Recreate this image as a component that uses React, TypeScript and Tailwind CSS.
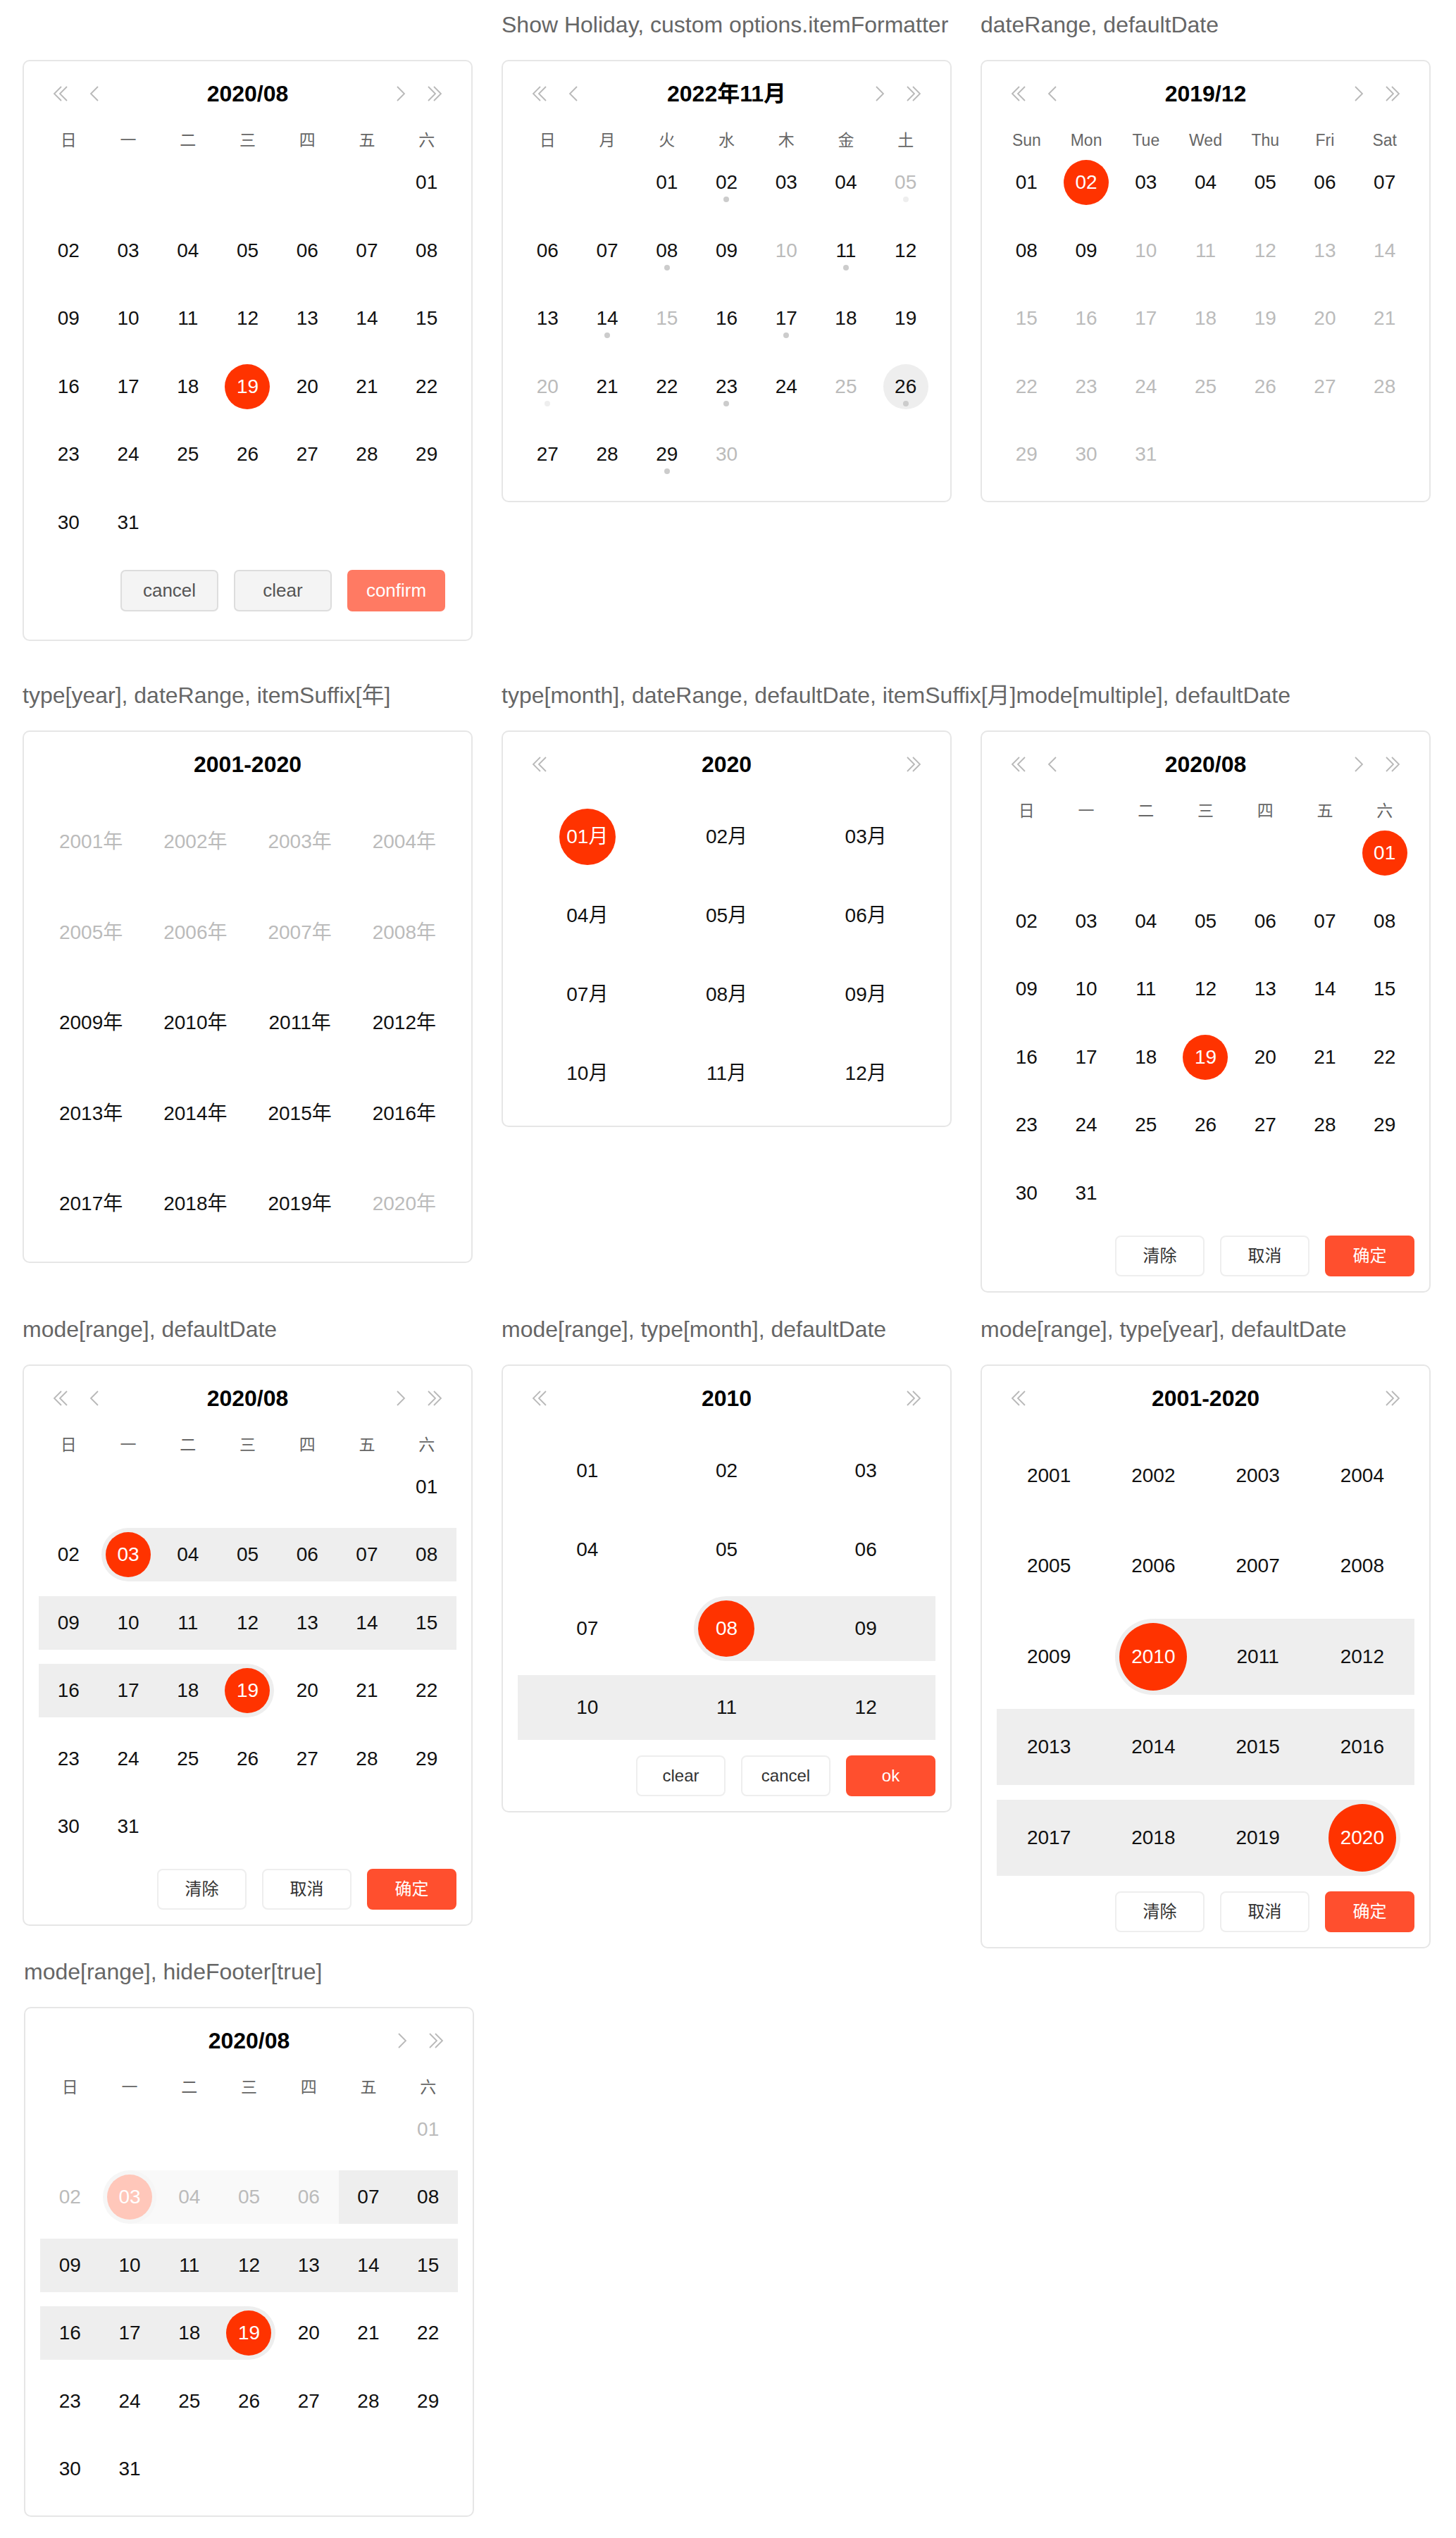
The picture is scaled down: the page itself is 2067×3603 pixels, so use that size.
import React from 'react';

type Band = 'full' | 'left' | 'right' | 'fullLight' | 'rightLight';
type Cell = {
    t: string;
    muted?: boolean;
    mark?: 'red' | 'pale' | 'gray';
    band?: Band;
    halo?: 'dark' | 'light';
    dot?: 'dark' | 'light';
} | null;

type Kind = 'day' | 'month' | 'year';

const SIZES: Record<Kind, { cell: string; halo: string; circle: string; cols: string; grid: string }> = {
    day: { cell: 'h-[76px]', halo: 'h-[76px] w-[76px]', circle: 'h-[64px] w-[64px]', cols: 'grid-cols-7', grid: 'gap-y-[20.5px]' },
    month: { cell: 'h-[92px]', halo: 'h-[92px] w-[92px]', circle: 'h-[80px] w-[80px]', cols: 'grid-cols-3', grid: 'mt-[33px] gap-y-[20px]' },
    year: { cell: 'h-[108px]', halo: 'h-[108px] w-[108px]', circle: 'h-[96px] w-[96px]', cols: 'grid-cols-4', grid: 'mt-[32px] gap-y-[20.5px]' },
};

const BANDS: Record<Band, string> = {
    full: 'bg-[#eeeeee]',
    left: 'bg-[linear-gradient(to_right,#eeeeee_50%,transparent_50%)]',
    right: 'bg-[linear-gradient(to_right,transparent_50%,#eeeeee_50%)]',
    fullLight: 'bg-[#f9f9f9]',
    rightLight: 'bg-[linear-gradient(to_right,transparent_50%,#f9f9f9_50%)]',
};

const MARKS = {
    red: 'bg-[#ff3300] text-white',
    pale: 'bg-[#ffc7ba] text-white',
    gray: 'bg-[#eeeeee] text-[#111]',
};

const CN_WEEK = ['日', '一', '二', '三', '四', '五', '六'];
const JP_WEEK = ['日', '月', '火', '水', '木', '金', '土'];
const EN_WEEK = ['Sun', 'Mon', 'Tue', 'Wed', 'Thu', 'Fri', 'Sat'];

function pad(n: number) {
    return n < 10 ? `0${n}` : `${n}`;
}

// builds a month grid: blanks first, then the days, then blanks to fill the last week
function monthDays(offset: number, count: number, fn: (d: number) => Partial<NonNullable<Cell>> = () => ({})): Cell[] {
    const cells: Cell[] = [];
    for (let i = 0; i < offset; i++) cells.push(null);
    for (let d = 1; d <= count; d++) cells.push({ t: pad(d), ...fn(d) });
    while (cells.length % 7 !== 0) cells.push(null);
    return cells;
}

function Chevron({ dir, double }: { dir: 'left' | 'right'; double?: boolean }) {
    const flip = dir === 'right' ? 'scale(-1,1)' : undefined;
    if (double) {
        return (
            <svg width="24" height="22" viewBox="0 0 24 22" fill="none" stroke="#b8b8b8" strokeWidth="1.8">
                <g transform={flip} style={{ transformOrigin: '12px 11px' }}>
                    <polyline points="13,1 3,11 13,21" />
                    <polyline points="21,1 11,11 21,21" />
                </g>
            </svg>
        );
    }
    return (
        <svg width="14" height="22" viewBox="0 0 14 22" fill="none" stroke="#b8b8b8" strokeWidth="1.8">
            <g transform={flip} style={{ transformOrigin: '7px 11px' }}>
                <polyline points="12,1 2,11 12,21" />
            </g>
        </svg>
    );
}

function ArrowBox({ children }: { children?: React.ReactNode }) {
    return <div className="flex w-[48px] items-center justify-center">{children}</div>;
}

function DateCell({ cell, kind }: { cell: Cell; kind: Kind }) {
    const s = SIZES[kind];
    if (!cell) return <div className={s.cell} />;
    const text = cell.muted ? 'text-[#bbbbbb]' : 'text-[#111]';
    let inner: React.ReactNode = <span className={text}>{cell.t}</span>;
    if (cell.mark) {
        inner = (
            <span className={`flex items-center justify-center rounded-full ${s.circle} ${MARKS[cell.mark]}`}>{cell.t}</span>
        );
    }
    if (cell.halo) {
        inner = (
            <span
                className={`flex items-center justify-center rounded-full ${s.halo} ${cell.halo === 'light' ? 'bg-[#f6f6f6]' : 'bg-[#eeeeee]'}`}
            >
                {inner}
            </span>
        );
    }
    return (
        <div className={`relative flex items-center justify-center ${s.cell} ${cell.band ? BANDS[cell.band] : ''}`}>
            {inner}
            {cell.dot && (
                <span
                    className={`absolute left-1/2 top-[calc(50%+20px)] h-[8px] w-[8px] -translate-x-1/2 rounded-full ${
                        cell.dot === 'light' ? 'bg-[#eeeeee]' : 'bg-[#cccccc]'
                    }`}
                />
            )}
        </div>
    );
}

type Footer = 'zh' | 'en' | 'legacy';

function CalendarCard({
    title,
    arrows,
    week,
    kind,
    cells,
    footer,
}: {
    title: string;
    arrows: 'both' | 'double' | 'right' | 'none';
    week?: string[];
    kind: Kind;
    cells: Cell[];
    footer?: Footer;
}) {
    const s = SIZES[kind];
    const pb = footer === 'legacy' ? 'pb-[40px]' : footer ? 'pb-[21px]' : 'pb-[28px]';
    return (
        <div className={`w-[639px] rounded-[10px] border-2 border-[#e6e6e6] bg-white px-[21px] pt-[22px] ${pb}`}>
            {/* header */}
            <div className="flex h-[48px] items-center">
                <div className="flex w-[110px] pl-[7px]">
                    {(arrows === 'both' || arrows === 'double') && (
                        <ArrowBox>
                            <Chevron dir="left" double />
                        </ArrowBox>
                    )}
                    {arrows === 'both' && (
                        <ArrowBox>
                            <Chevron dir="left" />
                        </ArrowBox>
                    )}
                </div>
                <div className="flex-1 text-center text-[32px] font-bold leading-[48px] text-black">{title}</div>
                <div className="flex w-[110px] justify-end pr-[7px]">
                    {(arrows === 'both' || arrows === 'right') && (
                        <ArrowBox>
                            <Chevron dir="right" />
                        </ArrowBox>
                    )}
                    {arrows !== 'none' && (
                        <ArrowBox>
                            <Chevron dir="right" double />
                        </ArrowBox>
                    )}
                </div>
            </div>

            {week && (
                <div className="grid grid-cols-7 pt-[28px] pb-[8px] text-center text-[23px] leading-[28px] text-[#666]">
                    {week.map((w) => (
                        <div key={w}>{w}</div>
                    ))}
                </div>
            )}

            <div className={`grid text-[28px] ${s.cols} ${s.grid}`}>
                {cells.map((c, i) => (
                    <DateCell key={i} cell={c} kind={kind} />
                ))}
            </div>

            {footer === 'legacy' && (
                <div className="mt-[29.5px] flex justify-end gap-[22px] pr-[16px] text-[26px]">
                    <button className="h-[59px] w-[139px] rounded-[7px] border-2 border-[#dddddd] bg-[#f4f4f4] text-[#555]">cancel</button>
                    <button className="h-[59px] w-[139px] rounded-[7px] border-2 border-[#dddddd] bg-[#f4f4f4] text-[#555]">clear</button>
                    <button className="h-[59px] w-[139px] rounded-[7px] border-2 border-[#ff7a63] bg-[#ff7a63] text-white">confirm</button>
                </div>
            )}
            {(footer === 'zh' || footer === 'en') && (
                <div className="mt-[22px] flex justify-end gap-[22px] text-[24px]">
                    {(footer === 'zh' ? ['清除', '取消'] : ['clear', 'cancel']).map((b) => (
                        <button key={b} className="h-[58px] w-[127px] rounded-[8px] border-2 border-[#eeeeee] bg-white text-[#333]">
                            {b}
                        </button>
                    ))}
                    <button className="h-[58px] w-[127px] rounded-[8px] border-2 border-[#ff4f2e] bg-[#ff4f2e] text-white">
                        {footer === 'zh' ? '确定' : 'ok'}
                    </button>
                </div>
            )}
        </div>
    );
}

function Demo({ label, children }: { label?: string; children: React.ReactNode }) {
    return (
        <div className="w-[639px]">
            <div className="mb-[26px] h-[48px] whitespace-nowrap text-[32px] leading-[48px] text-[#666]">{label}</div>
            {children}
        </div>
    );
}

const months = (fn: (m: number) => Partial<NonNullable<Cell>>, suffix = ''): Cell[] =>
    Array.from({ length: 12 }, (_, i) => ({ t: `${pad(i + 1)}${suffix}`, ...fn(i + 1) }));

const years = (fn: (y: number) => Partial<NonNullable<Cell>>, suffix = ''): Cell[] =>
    Array.from({ length: 20 }, (_, i) => ({ t: `${2001 + i}${suffix}`, ...fn(2001 + i) }));

const rangeAug = (d: number): Partial<NonNullable<Cell>> => {
    if (d === 3) return { mark: 'red', halo: 'dark', band: 'right' };
    if (d > 3 && d < 19) return { band: 'full' };
    if (d === 19) return { mark: 'red', halo: 'dark', band: 'left' };
    return {};
};

export default function App() {
    const holidayDots = [2, 8, 11, 14, 17, 23, 26, 29];
    return (
        <div className="min-h-[3603px] bg-white px-[32px] pt-[11px] pb-[30px] font-['Liberation_Sans','Noto_Sans_CJK_SC',sans-serif]">
            {/* row 1 */}
            <div className="flex items-start gap-[41px]">
                <Demo>
                    <CalendarCard
                        title="2020/08"
                        arrows="both"
                        week={CN_WEEK}
                        kind="day"
                        cells={monthDays(6, 31, (d) => (d === 19 ? { mark: 'red' } : {}))}
                        footer="legacy"
                    />
                </Demo>
                <Demo label="Show Holiday, custom options.itemFormatter">
                    <CalendarCard
                        title="2022年11月"
                        arrows="both"
                        week={JP_WEEK}
                        kind="day"
                        cells={monthDays(2, 30, (d) => ({
                            muted: d % 5 === 0,
                            mark: d === 26 ? 'gray' : undefined,
                            dot: d === 5 || d === 20 ? 'light' : holidayDots.includes(d) ? 'dark' : undefined,
                        }))}
                    />
                </Demo>
                <Demo label="dateRange, defaultDate">
                    <CalendarCard
                        title="2019/12"
                        arrows="both"
                        week={EN_WEEK}
                        kind="day"
                        cells={monthDays(0, 31, (d) => ({ muted: d >= 10, mark: d === 2 ? 'red' : undefined }))}
                    />
                </Demo>
            </div>

            {/* row 2 */}
            <div className="mt-[53px] flex items-start gap-[41px]">
                <Demo label="type[year], dateRange, itemSuffix[年]">
                    <CalendarCard
                        title="2001-2020"
                        arrows="none"
                        kind="year"
                        cells={years((y) => ({ muted: y < 2009 || y === 2020 }), '年')}
                    />
                </Demo>
                <Demo label="type[month], dateRange, defaultDate, itemSuffix[月]mode[multiple], defaultDate">
                    <CalendarCard
                        title="2020"
                        arrows="double"
                        kind="month"
                        cells={months((m) => (m === 1 ? { mark: 'red' } : {}), '月')}
                    />
                </Demo>
                <Demo>
                    <CalendarCard
                        title="2020/08"
                        arrows="both"
                        week={CN_WEEK}
                        kind="day"
                        cells={monthDays(6, 31, (d) => (d === 1 || d === 19 ? { mark: 'red' } : {}))}
                        footer="zh"
                    />
                </Demo>
            </div>

            {/* row 3 */}
            <div className="mt-[28px] flex items-start gap-[41px]">
                <Demo label="mode[range], defaultDate">
                    <CalendarCard title="2020/08" arrows="both" week={CN_WEEK} kind="day" cells={monthDays(6, 31, rangeAug)} footer="zh" />
                </Demo>
                <Demo label="mode[range], type[month], defaultDate">
                    <CalendarCard
                        title="2010"
                        arrows="double"
                        kind="month"
                        cells={months((m) =>
                            m === 8 ? { mark: 'red', halo: 'dark', band: 'right' } : m > 8 ? { band: 'full' } : {}
                        )}
                        footer="en"
                    />
                </Demo>
                <Demo label="mode[range], type[year], defaultDate">
                    <CalendarCard
                        title="2001-2020"
                        arrows="double"
                        kind="year"
                        cells={years((y) =>
                            y === 2010
                                ? { mark: 'red', halo: 'dark', band: 'right' }
                                : y === 2020
                                ? { mark: 'red', halo: 'dark', band: 'left' }
                                : y > 2010
                                ? { band: 'full' }
                                : {}
                        )}
                        footer="zh"
                    />
                </Demo>
            </div>

            {/* row 4 */}
            <div className="mt-[9px] ml-[2px] flex items-start gap-[41px]">
                <Demo label="mode[range], hideFooter[true]">
                    <CalendarCard
                        title="2020/08"
                        arrows="right"
                        week={CN_WEEK}
                        kind="day"
                        cells={monthDays(6, 31, (d) => {
                            if (d === 3) return { muted: true, mark: 'pale', halo: 'light', band: 'rightLight' };
                            if (d > 3 && d < 7) return { muted: true, band: 'fullLight' };
                            if (d < 3) return { muted: true };
                            return rangeAug(d);
                        })}
                    />
                </Demo>
            </div>
        </div>
    );
}
